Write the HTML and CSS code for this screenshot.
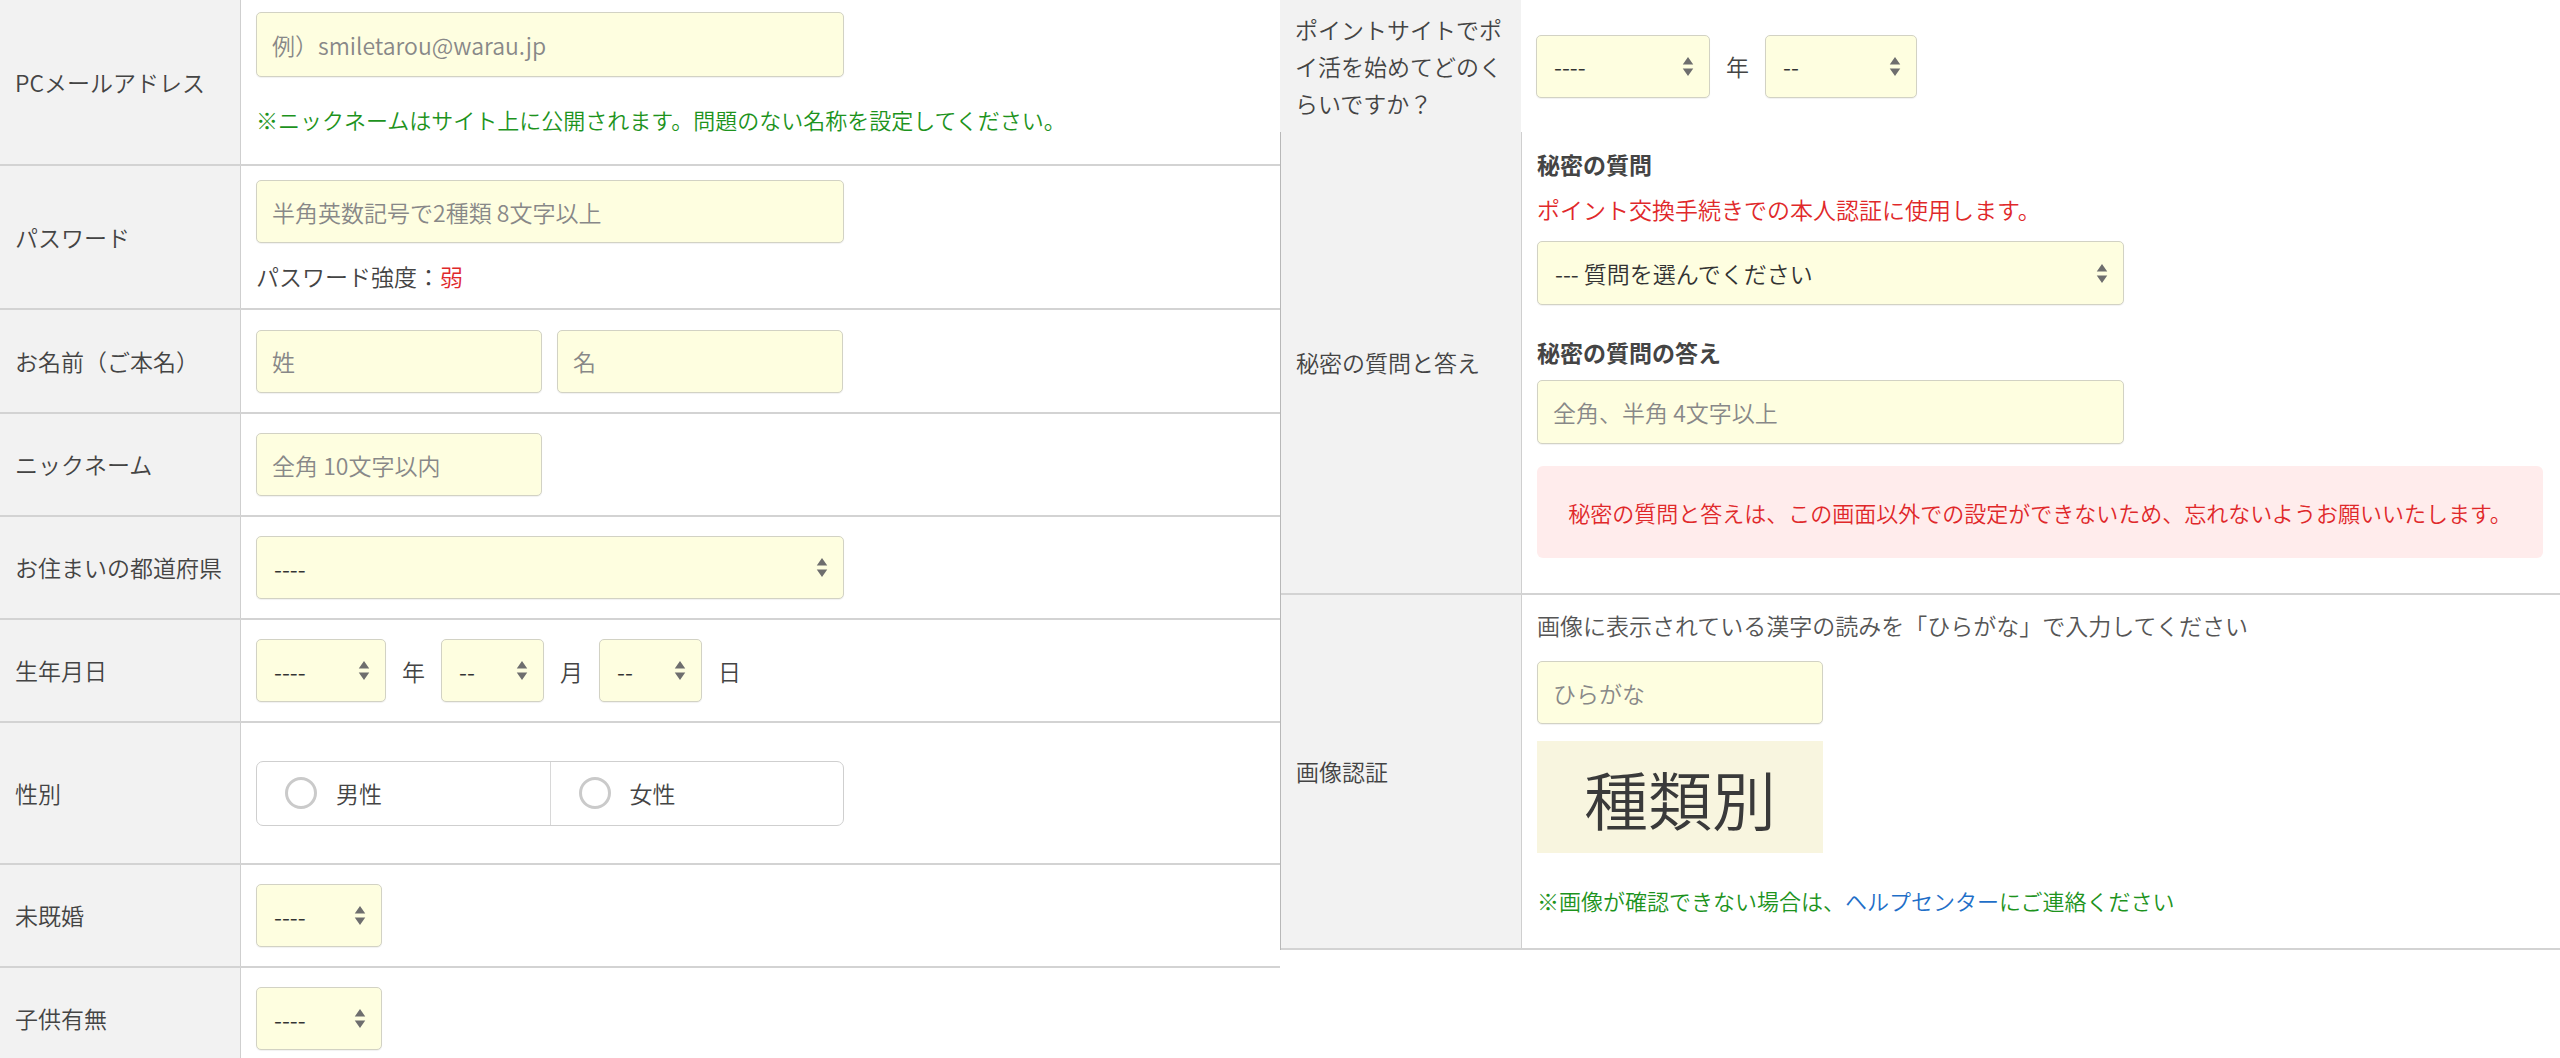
FILE: index.html
```
<!DOCTYPE html>
<html lang="ja">
<head>
<meta charset="utf-8">
<title>会員登録</title>
<link rel="stylesheet" href="styles.css">
</head>
<body>
<div class="page">
  <div class="left">
    <div class="row r1">
      <div class="lbl">PCメールアドレス</div>
      <div class="cnt top">
        <div class="inp w-full">例）smiletarou@warau.jp</div>
        <div class="note green n1">※ニックネームはサイト上に公開されます。問題のない名称を設定してください。</div>
      </div>
    </div>
    <div class="row r2">
      <div class="lbl">パスワード</div>
      <div class="cnt top">
        <div class="inp w-full">半角英数記号で2種類 8文字以上</div>
        <div class="line n2">パスワード強度：<span class="red">弱</span></div>
      </div>
    </div>
    <div class="row r3">
      <div class="lbl">お名前（ご本名）</div>
      <div class="cnt hz">
        <div class="inp w-half">姓</div>
        <div class="inp w-half">名</div>
      </div>
    </div>
    <div class="row r4">
      <div class="lbl">ニックネーム</div>
      <div class="cnt hz">
        <div class="inp w-half">全角 10文字以内</div>
      </div>
    </div>
    <div class="row r5">
      <div class="lbl">お住まいの都道府県</div>
      <div class="cnt hz">
        <div class="sel w-full"><span>----</span><svg class="arr" viewBox="0 0 12 22"><path d="M6 1 L11.5 9 L0.5 9 Z M6 21 L11.5 13 L0.5 13 Z"/></svg></div>
      </div>
    </div>
    <div class="row r6">
      <div class="lbl">生年月日</div>
      <div class="cnt hz gap">
        <div class="sel w-y"><span>----</span><svg class="arr" viewBox="0 0 12 22"><path d="M6 1 L11.5 9 L0.5 9 Z M6 21 L11.5 13 L0.5 13 Z"/></svg></div>
        <span class="unit">年</span>
        <div class="sel w-md"><span>--</span><svg class="arr" viewBox="0 0 12 22"><path d="M6 1 L11.5 9 L0.5 9 Z M6 21 L11.5 13 L0.5 13 Z"/></svg></div>
        <span class="unit">月</span>
        <div class="sel w-md"><span>--</span><svg class="arr" viewBox="0 0 12 22"><path d="M6 1 L11.5 9 L0.5 9 Z M6 21 L11.5 13 L0.5 13 Z"/></svg></div>
        <span class="unit">日</span>
      </div>
    </div>
    <div class="row r7">
      <div class="lbl">性別</div>
      <div class="cnt hz">
        <div class="radios">
          <label class="radio"><span class="circle"></span>男性</label>
          <label class="radio"><span class="circle"></span>女性</label>
        </div>
      </div>
    </div>
    <div class="row r8">
      <div class="lbl">未既婚</div>
      <div class="cnt hz">
        <div class="sel w-s"><span>----</span><svg class="arr" viewBox="0 0 12 22"><path d="M6 1 L11.5 9 L0.5 9 Z M6 21 L11.5 13 L0.5 13 Z"/></svg></div>
      </div>
    </div>
    <div class="row r9">
      <div class="lbl">子供有無</div>
      <div class="cnt hz">
        <div class="sel w-s"><span>----</span><svg class="arr" viewBox="0 0 12 22"><path d="M6 1 L11.5 9 L0.5 9 Z M6 21 L11.5 13 L0.5 13 Z"/></svg></div>
      </div>
    </div>
  </div>

  <div class="right">
    <div class="row ra">
      <div class="lbl lbl-ml">ポイントサイトでポイ活を始めてどのくらいですか？</div>
      <div class="cnt hz gap">
        <div class="sel w-ry"><span>----</span><svg class="arr" viewBox="0 0 12 22"><path d="M6 1 L11.5 9 L0.5 9 Z M6 21 L11.5 13 L0.5 13 Z"/></svg></div>
        <span class="unit">年</span>
        <div class="sel w-rm"><span>--</span><svg class="arr" viewBox="0 0 12 22"><path d="M6 1 L11.5 9 L0.5 9 Z M6 21 L11.5 13 L0.5 13 Z"/></svg></div>
      </div>
    </div>
    <div class="rtable">
      <div class="row rb">
        <div class="lbl">秘密の質問と答え</div>
        <div class="cnt top">
          <div class="ttl">秘密の質問</div>
          <div class="line red b-red">ポイント交換手続きでの本人認証に使用します。</div>
          <div class="sel w-q b-sel"><span>--- 質問を選んでください</span><svg class="arr" viewBox="0 0 12 22"><path d="M6 1 L11.5 9 L0.5 9 Z M6 21 L11.5 13 L0.5 13 Z"/></svg></div>
          <div class="ttl b-ttl2">秘密の質問の答え</div>
          <div class="inp w-q b-inp">全角、半角 4文字以上</div>
          <div class="alert">秘密の質問と答えは、この画面以外での設定ができないため、忘れないようお願いいたします。</div>
        </div>
      </div>
      <div class="row rc">
        <div class="lbl">画像認証</div>
        <div class="cnt top">
          <div class="line c-txt">画像に表示されている漢字の読みを「ひらがな」で入力してください</div>
          <div class="inp w-c c-inp">ひらがな</div>
          <div class="captcha">種類別</div>
          <div class="note green c-note">※画像が確認できない場合は、<a class="link">ヘルプセンター</a>にご連絡ください</div>
        </div>
      </div>
    </div>
  </div>
</div>
</body>
</html>
```

FILE: styles.css
```
* { box-sizing: border-box; }
html, body { margin: 0; padding: 0; background: #fff; }
body {
  font-family: "Noto Sans CJK JP", "Noto Sans", sans-serif;
  font-size: 23px;
  font-weight: 350;
  color: #444;
}
.page {
  display: flex;
  width: 2560px;
  height: 1058px;
  overflow: hidden;
}
.left { width: 1280px; flex: none; }
.right { width: 1280px; flex: none; display: flex; flex-direction: column; }

.row {
  display: flex;
  border-bottom: 2px solid #d3d3d3;
}
.lbl {
  width: 241px;
  flex: none;
  background: #f2f2f2;
  border-right: 1px solid #cfcfcf;
  display: flex;
  align-items: center;
  padding-left: 15px;
  line-height: 33px;
  color: #444;
}
.cnt {
  flex: 1;
  padding: 0 15px;
  display: flex;
}
.cnt.top { flex-direction: column; align-items: flex-start; }
.cnt.hz { align-items: center; gap: 15px; }
.cnt.hz.gap { gap: 16px; }

.r1 { height: 166px; }
.r1 .cnt { padding-top: 12px; }
.r2 { height: 144px; }
.r2 .cnt { padding-top: 14px; }
.r3 { height: 104px; }
.r4, .r5, .r6, .r8 { height: 103px; }
.r7 { height: 142px; }
.r9 { height: 103px; }

.inp, .sel {
  height: 63px;
  background: #fefee0;
  border: 1px solid #d2d2c4;
  border-radius: 5px;
  box-shadow: 0 1px 1px rgba(0,0,0,0.06);
  display: flex;
  align-items: center;
  flex: none;
}
.inp { padding-left: 15px; color: #888; }
.r1 .inp { height: 65px; }
.sel { padding: 0 15px 0 17px; justify-content: space-between; color: #333; }
.arr { width: 12px; height: 21px; fill: #6e6e6e; flex: none; }

.w-full { width: 588px; }
.w-half { width: 286px; }
.w-y { width: 130px; }
.w-md { width: 103px; }
.w-s { width: 126px; }
.w-ry { width: 174px; }
.w-rm { width: 152px; }
.w-q { width: 587px; }
.w-c { width: 286px; }

.unit { color: #444; }

.line, .note { line-height: 33px; }
.note { font-size: 22px; }
.green { color: #1d931d; }
.red { color: #e0282a; }
.n1 { margin-top: 26px; }
.n2 { margin-top: 17px; }

.radios {
  width: 588px;
  height: 65px;
  border: 1px solid #cfcfcf;
  border-radius: 7px;
  display: flex;
}
.radio {
  flex: 1;
  display: flex;
  align-items: center;
  padding-left: 28px;
  gap: 19px;
  color: #444;
}
.radio + .radio { border-left: 1px solid #d8d8d8; }
.circle {
  width: 32px;
  height: 32px;
  border-radius: 50%;
  border: 3px solid #cacaca;
  background: #fff;
  flex: none;
}

/* right side */
.ra { height: 132px; border-bottom: none; }
.lbl-ml { line-height: 37px; padding-right: 10px; border-right: none; }
.rtable { border-left: 1px solid #b8b8b8; flex: none; }
.rb { height: 463px; }
.rb .cnt { padding-top: 16px; }
.rc { height: 355px; border-bottom: 2px solid #d3d3d3; }
.rc .cnt { padding-top: 14px; }

.ttl { font-weight: bold; line-height: 33px; color: #444; }
.b-red { margin-top: 12px; }
.b-sel { margin-top: 15px; height: 64px; }
.b-ttl2 { margin-top: 31px; }
.b-inp { margin-top: 11px; height: 64px; }
.alert {
  margin-top: 22px;
  width: 1006px;
  height: 92px;
  background: #ffecec;
  border-radius: 6px;
  color: #e0282a;
  font-size: 22px;
  display: flex;
  align-items: center;
  justify-content: center;
}

.c-txt { color: #555; }
.c-inp { margin-top: 19px; }
.captcha {
  margin-top: 17px;
  width: 286px;
  height: 112px;
  background: #f8f5df;
  display: flex;
  align-items: center;
  justify-content: center;
  font-size: 64px;
  color: #3a3a3a;
  line-height: 1;
}
.c-note { margin-top: 31px; }
.link { color: #1f6fc8; text-decoration: none; }
```
